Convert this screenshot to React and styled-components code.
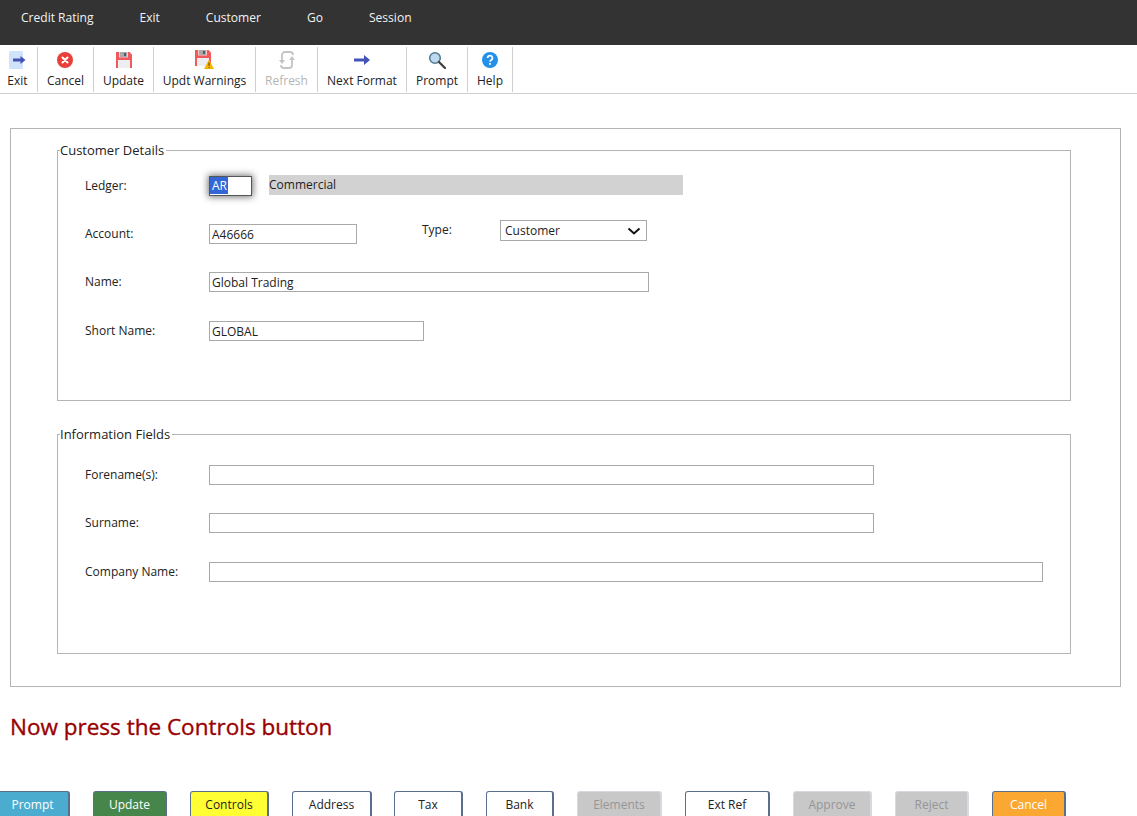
import React from "react";
import styled, { createGlobalStyle } from "styled-components";

const GlobalStyle = createGlobalStyle`
  html, body {
    margin: 0;
    padding: 0;
    height: 816px;
    overflow: hidden;
    background: #fff;
    font-family: "Open Sans", "Liberation Sans", sans-serif;
    font-size: 12px;
    color: #222;
  }
`;

const Page = styled.div`
  width: 1137px;
  height: 816px;
  overflow: hidden;
`;

const MenuBar = styled.div`
  height: 45px;
  background: #333333;
  display: flex;
  padding: 10px 0 0 21px;
  box-sizing: border-box;
  gap: 46px;
`;

const MenuItem = styled.span`
  color: #f2f2f2;
  font-size: 12.05px;
  line-height: 16px;
`;

const Toolbar = styled.div`
  height: 49px;
  box-sizing: border-box;
  display: flex;
  padding-top: 2px;
  border-bottom: 1px solid #d0d0d0;
`;

const ToolButton = styled.div`
  width: ${({ $w }) => $w}px;
  height: 45px;
  box-sizing: border-box;
  padding-right: ${({ $pr }) => $pr || 0}px;
  border-right: 1px solid #cfcfcf;
  display: flex;
  flex-direction: column;
  align-items: center;
  color: ${({ $off }) => ($off ? "#b5b5b5" : "#222")};
`;

const ToolIcon = styled.div`
  height: 26px;
  box-sizing: border-box;
  padding-bottom: 1px;
  display: flex;
  align-items: center;
  justify-content: center;
`;

const ToolLabel = styled.span`
  font-size: 12px;
  line-height: 16px;
  white-space: nowrap;
`;

const Outer = styled.div`
  margin: 34px 16px 0 10px;
  height: 559px;
  box-sizing: border-box;
  border: 1px solid #b4b4b4;
  padding: 13px 49px 0 46px;
`;

const Group = styled.fieldset`
  margin: 0 0 ${({ $mb }) => $mb || 0}px;
  padding: 0 0 0 27px;
  height: ${({ $h }) => $h}px;
  box-sizing: border-box;
  border: 1px solid #b4b4b4;
  min-inline-size: 0;
`;

const Legend = styled.legend`
  padding: 0 2px 0 0;
  margin-left: -25px;
  font-size: 13px;
  line-height: 17px;
  color: #222;
`;

const Rows = styled.div`
  display: flex;
  flex-direction: column;
  gap: ${({ $gap }) => $gap}px;
  padding-top: ${({ $pt }) => $pt}px;
`;

const Row = styled.div`
  display: flex;
  align-items: center;
  height: 20px;
`;

const Label = styled.label`
  width: ${({ $w }) => $w || 124}px;
  flex: none;
  font-size: 12px;
  line-height: 16px;
  position: relative;
`;

const Field = styled.div`
  width: ${({ $w }) => $w}px;
  height: 20px;
  flex: none;
  box-sizing: border-box;
  border: 1px solid #a9a9a9;
  background: #fff;
  padding: 0 2px;
  font-size: 12px;
  line-height: 19px;
  white-space: nowrap;
`;

const FocusField = styled(Field)`
  width: 43px;
  padding: 0;
  border: 1px solid #555;
  box-shadow: 0 0 7px 1px rgba(0, 0, 0, 0.55);
  line-height: 18px;
`;

const Selected = styled.span`
  display: inline-block;
  background: #3367d6;
  color: #fff;
  height: 17px;
  padding: 0 1px 0 2px;
  line-height: 17px;
  vertical-align: top;
`;

const ReadOnly = styled.div`
  margin: 0 0 2px 17px;
  width: 414px;
  height: 20px;
  box-sizing: border-box;
  background: #d2d2d2;
  font-size: 12px;
  line-height: 19px;
`;

const TypeLabel = styled(Label)`
  margin-left: 65px;
  width: 78px;
  top: -4px;
`;

const SelectBox = styled(Field)`
  width: 147px;
  height: 21px;
  margin-top: -7px;
  padding: 0 5px 0 4px;
  display: flex;
  align-items: center;
  justify-content: space-between;
`;

const Message = styled.div`
  margin: 24px 0 0 10px;
  color: #990000;
  font-size: 22.5px;
  font-weight: 400;
  -webkit-text-stroke: 0.35px #990000;
  line-height: 31px;
  white-space: nowrap;
`;

const ButtonBar = styled.div`
  margin: 49px 0 0 -4px;
  display: flex;
  gap: 23px;
`;

const ActionButton = styled.div`
  width: ${({ $w }) => $w}px;
  height: 30px;
  flex: none;
  box-sizing: border-box;
  margin-left: ${({ $pull }) => ($pull ? -1 : 0)}px;
  border-radius: 3px;
  border: 1px solid ${({ $off }) => ($off ? "#d8d8e0" : "#5a6f8c")};
  border-right-width: 2px;
  background: ${({ $bg }) => $bg || "#fff"};
  color: ${({ $fg }) => $fg || "#222"};
  font-size: 12px;
  line-height: 26px;
  text-align: center;
`;

const ExitIcon = () => (
  <svg width="17" height="18" viewBox="0 0 17 18">
    <rect x="0" y="0" width="14" height="18" rx="1.5" fill="#cfe3fb" />
    <path d="M4 7.500h7.500V5l5 4-5 4v-2.500H4z" fill="#4453b8" />
  </svg>
);

const CancelIcon = () => (
  <svg width="17" height="16" viewBox="0 0 17 16">
    <circle cx="8" cy="8" r="8" fill="#e8403a" />
    <path d="M5.500 5.500l5 5M10.500 5.500l-5 5" stroke="#fff" strokeWidth="2" strokeLinecap="round" />
  </svg>
);

const Floppy = () => (
  <>
    <path d="M0 0h13.500L16 2.500V16H0z" fill="#ee5a5e" />
    <rect x="3" y="0" width="9" height="5.500" fill="#f6c9c9" />
    <rect x="4" y="0" width="7" height="5" fill="#a9a9ad" />
    <rect x="8" y="1" width="2" height="3" fill="#55585e" />
    <rect x="2" y="8" width="12" height="8" fill="#eeeef0" />
  </>
);

const UpdateIcon = () => (
  <svg width="16" height="16" viewBox="0 0 16 16">
    <Floppy />
  </svg>
);

const WarnIcon = () => (
  <svg width="19" height="19" viewBox="0 0 19 19">
    <Floppy />
    <path d="M14 9.500l5 9.500H9z" fill="#f7b500" />
    <path d="M14 12.500v3.500M14 17v1" stroke="#5a4300" strokeWidth="1" />
  </svg>
);

const RefreshIcon = () => (
  <svg width="18" height="20" viewBox="0 0 18 20" fill="none">
    <path d="M4 11V5a3 3 0 0 1 3-3h5a3 3 0 0 1 3 3" stroke="#c4c4c4" strokeWidth="1.800" />
    <path d="M14 9v6a3 3 0 0 1-3 3H6a3 3 0 0 1-3-3" stroke="#c4c4c4" strokeWidth="1.800" />
    <path d="M1 10h6l-3 4zM11 10h6l-3-4z" fill="#c4c4c4" />
  </svg>
);

const ArrowIcon = () => (
  <svg width="16" height="12" viewBox="0 0 16 12">
    <path d="M0 4.500h10V1l6 5-6 5V7.500H0z" fill="#4453b8" />
  </svg>
);

const SearchIcon = () => (
  <svg width="18" height="18" viewBox="0 0 18 18" fill="none">
    <circle cx="7" cy="7" r="5.300" fill="#bcd9ef" stroke="#52798f" strokeWidth="1.500" />
    <path d="M11 11l6 6" stroke="#3e3e3e" strokeWidth="2.200" strokeLinecap="round" />
  </svg>
);

const HelpIcon = () => (
  <svg width="18" height="18" viewBox="0 0 18 18">
    <circle cx="9" cy="9" r="8" fill="#2390ea" />
    <path d="M6.600 7a2.400 2.400 0 1 1 3.500 2.100c-.8.5-1.100.9-1.100 1.700" fill="none" stroke="#fff" strokeWidth="1.700" />
    <rect x="8.100" y="12" width="1.800" height="1.800" fill="#fff" />
  </svg>
);

const Chevron = () => (
  <svg width="14" height="8" viewBox="0 0 14 8" fill="none">
    <path d="M1.500 1.500L7 6.500l5.500-5" stroke="#111" strokeWidth="2" />
  </svg>
);

const menus = [
  { label: "Credit Rating" },
  { label: "Exit" },
  { label: "Customer" },
  { label: "Go" },
  { label: "Session" },
];

const tools = [
  { label: "Exit", w: 38, pr: 2, icon: <ExitIcon /> },
  { label: "Cancel", w: 56, icon: <CancelIcon /> },
  { label: "Update", w: 60, icon: <UpdateIcon /> },
  { label: "Updt Warnings", w: 102, icon: <WarnIcon /> },
  { label: "Refresh", w: 62, icon: <RefreshIcon />, off: true },
  { label: "Next Format", w: 89, icon: <ArrowIcon /> },
  { label: "Prompt", w: 61, icon: <SearchIcon /> },
  { label: "Help", w: 45, icon: <HelpIcon /> },
];

const buttons = [
  { label: "Prompt", w: 74, bg: "#4bacd0", fg: "#fff" },
  { label: "Update", w: 74, bg: "#46864a", fg: "#fff" },
  { label: "Controls", w: 79, bg: "#ffff33" },
  { label: "Address", w: 80 },
  { label: "Tax", w: 69, pull: true },
  { label: "Bank", w: 68 },
  { label: "Elements", w: 85, bg: "#c8c8c8", fg: "#969696", off: true },
  { label: "Ext Ref", w: 85 },
  { label: "Approve", w: 79, bg: "#c8c8c8", fg: "#969696", off: true },
  { label: "Reject", w: 74, bg: "#c8c8c8", fg: "#969696", off: true },
  { label: "Cancel", w: 74, bg: "#fba832", fg: "#fff" },
];

export default function App() {
  return (
    <Page>
      <GlobalStyle />
      <MenuBar>
        {menus.map((m) => (
          <MenuItem key={m.label}>{m.label}</MenuItem>
        ))}
      </MenuBar>
      <Toolbar>
        {tools.map((t) => (
          <ToolButton key={t.label} $w={t.w} $pr={t.pr} $off={t.off}>
            <ToolIcon>{t.icon}</ToolIcon>
            <ToolLabel>{t.label}</ToolLabel>
          </ToolButton>
        ))}
      </Toolbar>
      <Outer>
        <Group $h={259} $mb={25}>
          <Legend>Customer Details</Legend>
          <Rows $pt={17} $gap={28.2}>
            <Row>
              <Label>Ledger:</Label>
              <FocusField>
                <Selected>AR</Selected>
              </FocusField>
              <ReadOnly>Commercial</ReadOnly>
            </Row>
            <Row>
              <Label>Account:</Label>
              <Field $w={148}>A46666</Field>
              <TypeLabel>Type:</TypeLabel>
              <SelectBox>
                Customer
                <Chevron />
              </SelectBox>
            </Row>
            <Row>
              <Label>Name:</Label>
              <Field $w={440}>Global Trading</Field>
            </Row>
            <Row>
              <Label>Short Name:</Label>
              <Field $w={215}>GLOBAL</Field>
            </Row>
          </Rows>
        </Group>
        <Group $h={228}>
          <Legend>Information Fields</Legend>
          <Rows $pt={22} $gap={28.4}>
            <Row>
              <Label>Forename(s):</Label>
              <Field $w={665} />
            </Row>
            <Row>
              <Label>Surname:</Label>
              <Field $w={665} />
            </Row>
            <Row>
              <Label>Company Name:</Label>
              <Field $w={834} />
            </Row>
          </Rows>
        </Group>
      </Outer>
      <Message>Now press the Controls button</Message>
      <ButtonBar>
        {buttons.map((b) => (
          <ActionButton key={b.label} $w={b.w} $bg={b.bg} $fg={b.fg} $off={b.off} $pull={b.pull}>
            {b.label}
          </ActionButton>
        ))}
      </ButtonBar>
    </Page>
  );
}
